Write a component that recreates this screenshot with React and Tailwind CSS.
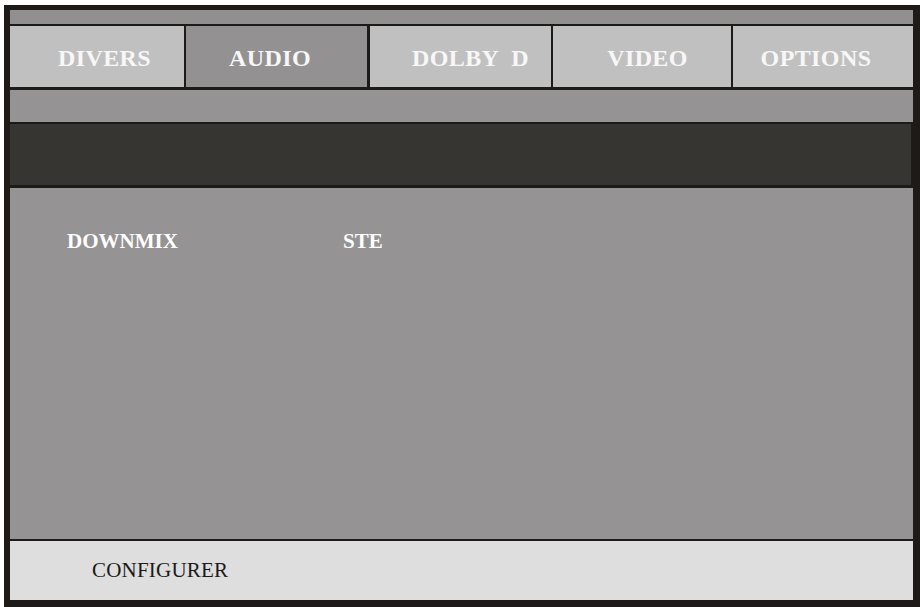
const tabs = [
  { label: 'DIVERS', width: 'w-[174px]', shift: 'pl-[15px]', active: false },
  { label: 'AUDIO', width: 'w-[181px]', shift: 'pr-[13px]', active: true },
  { label: 'DOLBY  D', width: 'w-[181px]', shift: 'pl-[20px]', active: false },
  { label: 'VIDEO', width: 'w-[178px]', shift: 'pl-[11px]', active: false },
  { label: 'OPTIONS', width: 'w-[180px]', shift: 'pr-[14px]', active: false },
];

export default function App() {
  return (
    <div className="w-[920px] h-[607px] bg-white" style={{ fontFamily: '"Liberation Serif", "Times New Roman", serif' }}>
      <div className="ml-[4px] mt-[5px] w-[916px] h-[602px] bg-[#1e1a17] pl-[6px] pt-[5px] pr-[7px] pb-[7px]">
        <div className="flex flex-col h-full">
          {/* top strip */}
          <div className="h-[14px] bg-[#918f90]" />

          {/* tab bar */}
          <div className="mt-[2px] h-[61px] flex">
            {tabs.map((t, i) => (
              <div
                key={t.label}
                className={`${t.width} ${t.shift} ${i === 2 ? 'ml-[3px]' : i > 0 ? 'ml-[2px]' : ''} ${
                  t.active ? 'bg-[#939192]' : 'bg-[#c1c0c0]'
                } flex items-center justify-center pt-[2px]`}
              >
                <span className="text-[24px] font-bold text-[#f7f7f7] whitespace-pre leading-none tracking-[0.4px]">
                  {t.label}
                </span>
              </div>
            ))}
          </div>

          {/* sub strip */}
          <div className="mt-[3px] h-[32px] bg-[#959394]" />

          {/* dark display panel */}
          <div className="mt-[2px] h-[61px] bg-[#363532] mr-[2px]" />

          {/* settings area */}
          <div className="mt-[3px] h-[351px] bg-[#959394] pt-[43px] pl-[57px]">
            <div className="flex text-[21px] font-bold text-white leading-none">
              <div className="w-[276px]">DOWNMIX</div>
              <div>STE</div>
            </div>
          </div>

          {/* footer */}
          <div className="mt-[2px] h-[59px] bg-[#dedede] flex items-center pl-[82px]">
            <span className="text-[21px] text-[#1a1a1a] leading-none tracking-[0.2px]">CONFIGURER</span>
          </div>
        </div>
      </div>
    </div>
  );
}
